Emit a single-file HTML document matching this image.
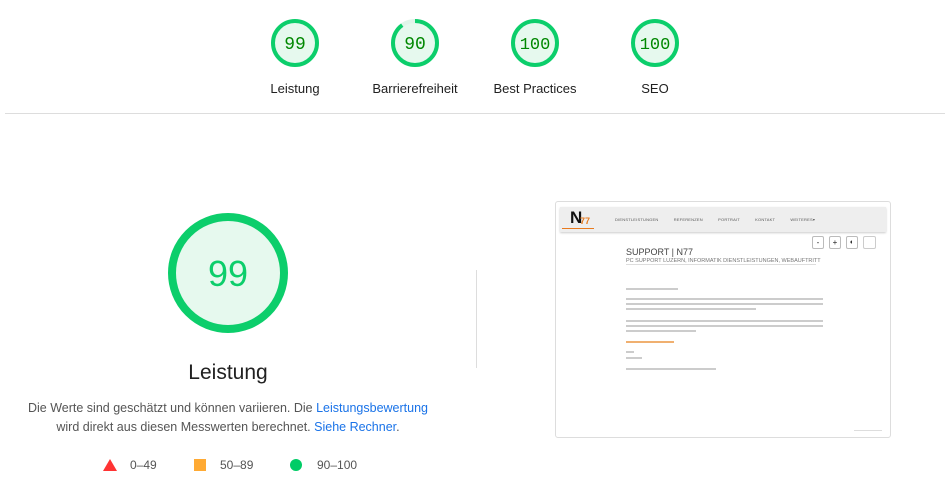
<!DOCTYPE html><html><head><style>
body{margin:0;width:949px;height:486px;background:#fff;font-family:"Liberation Sans",sans-serif;position:relative;overflow:hidden;color:#212121}
.g{position:absolute;width:120px;text-align:center}
.g svg{display:block;margin:0 auto}
.lbl{font-size:13px;margin-top:14px;color:#212121}
.abs{position:absolute}
.tx{font-size:12.5px;color:#555;text-align:center;line-height:19px;white-space:nowrap}
a{color:#1a73e8;text-decoration:none}
.sl{position:absolute;height:3px;background:#bbb}
</style></head><body>
<div class="g" style="left:235px;top:19px"><svg width="48" height="48"><circle cx="24" cy="24" r="22" fill="#e6f9ee" stroke="#0cce6b" stroke-width="4"/><text x="24" y="30" text-anchor="middle" font-family="Liberation Mono" font-size="18" fill="#008800">99</text></svg><div class="lbl">Leistung</div></div>
<div class="g" style="left:355px;top:19px"><svg width="48" height="48"><circle cx="24" cy="24" r="22" fill="#e6f9ee" stroke="#e0f5e9" stroke-width="4"/><circle cx="24" cy="24" r="22" fill="none" stroke="#0cce6b" stroke-width="4" stroke-dasharray="124.4 200" transform="rotate(-90 24 24)"/><text x="24" y="30" text-anchor="middle" font-family="Liberation Mono" font-size="18" fill="#008800">90</text></svg><div class="lbl">Barrierefreiheit</div></div>
<div class="g" style="left:475px;top:19px"><svg width="48" height="48"><circle cx="24" cy="24" r="22" fill="#e6f9ee" stroke="#0cce6b" stroke-width="4"/><text x="24" y="30" text-anchor="middle" font-family="Liberation Mono" font-size="17" fill="#008800">100</text></svg><div class="lbl">Best Practices</div></div>
<div class="g" style="left:595px;top:19px"><svg width="48" height="48"><circle cx="24" cy="24" r="22" fill="#e6f9ee" stroke="#0cce6b" stroke-width="4"/><text x="24" y="30" text-anchor="middle" font-family="Liberation Mono" font-size="17" fill="#008800">100</text></svg><div class="lbl">SEO</div></div>
<div class="abs" style="left:5px;right:4px;top:113px;height:1px;background:#ddd"></div>
<svg class="abs" style="left:166px;top:211px" width="124" height="124"><circle cx="62" cy="62" r="56" fill="#e6f9ee" stroke="#0cce6b" stroke-width="8"/><text x="62" y="75" text-anchor="middle" font-size="36" fill="#0cce6b">99</text></svg>
<div class="abs" style="left:128px;width:200px;top:361px;text-align:center;font-size:21px;color:#212121">Leistung</div>
<div class="abs tx" style="left:8px;width:440px;top:399px">Die Werte sind geschätzt und können variieren. Die <a>Leistungsbewertung</a><br>wird direkt aus diesen Messwerten berechnet. <a>Siehe Rechner</a>.</div>
<svg class="abs" style="left:103px;top:459px" width="14" height="12"><polygon points="7,0 14,12 0,12" fill="#f33"/></svg>
<div class="abs" style="left:130px;top:458px;font-size:12px;color:#555">0–49</div>
<div class="abs" style="left:194px;top:459px;width:12px;height:12px;background:#fa3"></div>
<div class="abs" style="left:220px;top:458px;font-size:12px;color:#555">50–89</div>
<div class="abs" style="left:290px;top:459px;width:12px;height:12px;border-radius:50%;background:#0c6"></div>
<div class="abs" style="left:317px;top:458px;font-size:12px;color:#555">90–100</div>
<div class="abs" style="left:476px;top:270px;width:1px;height:98px;background:#ddd"></div>
<div class="abs" style="left:555px;top:201px;width:334px;height:235px;border:1px solid #ddd;border-radius:3px;background:#fff;overflow:hidden">
 <div class="abs" style="left:4px;top:5px;width:326px;height:25px;background:#eee;box-shadow:0 1px 2px #ccc"></div>
 <div class="abs" style="left:14px;top:6px;font-size:17px;font-weight:bold;color:#111">N</div>
 <div class="abs" style="left:24px;top:14px;font-size:9px;font-weight:bold;color:#e87a1e">77</div>
 <div class="abs" style="left:6px;top:26px;width:32px;height:1px;background:#e87a1e"></div>
 <div class="abs" style="left:59px;top:15px;font-size:4px;color:#555;letter-spacing:.2px;word-spacing:14px;white-space:nowrap">DIENSTLEISTUNGEN REFERENZEN PORTRAIT KONTAKT WEITERES▾</div>
 <div class="abs" style="left:256px;top:34px;width:10px;height:11px;border:1px solid #bbb;border-radius:2px;font-size:8px;text-align:center;line-height:11px">-</div>
 <div class="abs" style="left:273px;top:34px;width:10px;height:11px;border:1px solid #bbb;border-radius:2px;font-size:8px;text-align:center;line-height:11px">+</div>
 <div class="abs" style="left:290px;top:34px;width:10px;height:11px;border:1px solid #bbb;border-radius:2px;font-size:7px;text-align:center;line-height:11px">◐</div>
 <div class="abs" style="left:307px;top:34px;width:11px;height:11px;border:1px solid #ccc;border-radius:2px"></div>
 <div class="abs" style="left:70px;top:45px;font-size:9px;color:#444;white-space:nowrap">SUPPORT | N77</div>
 <div class="abs" style="left:70px;top:56px;font-size:5.5px;color:#777;border-bottom:1px solid #ddd;width:190px;white-space:nowrap">PC SUPPORT LUZERN, INFORMATIK DIENSTLEISTUNGEN, WEBAUFTRITT</div>
 <div class="sl" style="left:70px;top:86px;width:52px;background:#ccc;height:2px"></div>
 <div class="sl" style="left:70px;top:96px;width:197px;background:#ccc;height:2px"></div>
 <div class="sl" style="left:70px;top:101px;width:197px;background:#ccc;height:2px"></div>
 <div class="sl" style="left:70px;top:106px;width:130px;background:#ccc;height:2px"></div>
 <div class="sl" style="left:70px;top:118px;width:197px;background:#ccc;height:2px"></div>
 <div class="sl" style="left:70px;top:123px;width:197px;background:#ccc;height:2px"></div>
 <div class="sl" style="left:70px;top:128px;width:70px;background:#ccc;height:2px"></div>
 <div class="sl" style="left:70px;top:139px;width:48px;background:#f0b070;height:2px"></div>
 <div class="sl" style="left:70px;top:149px;width:8px;background:#ccc;height:2px"></div>
 <div class="sl" style="left:70px;top:155px;width:16px;background:#ccc;height:2px"></div>
 <div class="sl" style="left:70px;top:166px;width:90px;background:#ccc;height:2px"></div>
 <div class="sl" style="left:298px;top:228px;width:28px;background:#ddd;height:1px"></div>
</div>
</body></html>
